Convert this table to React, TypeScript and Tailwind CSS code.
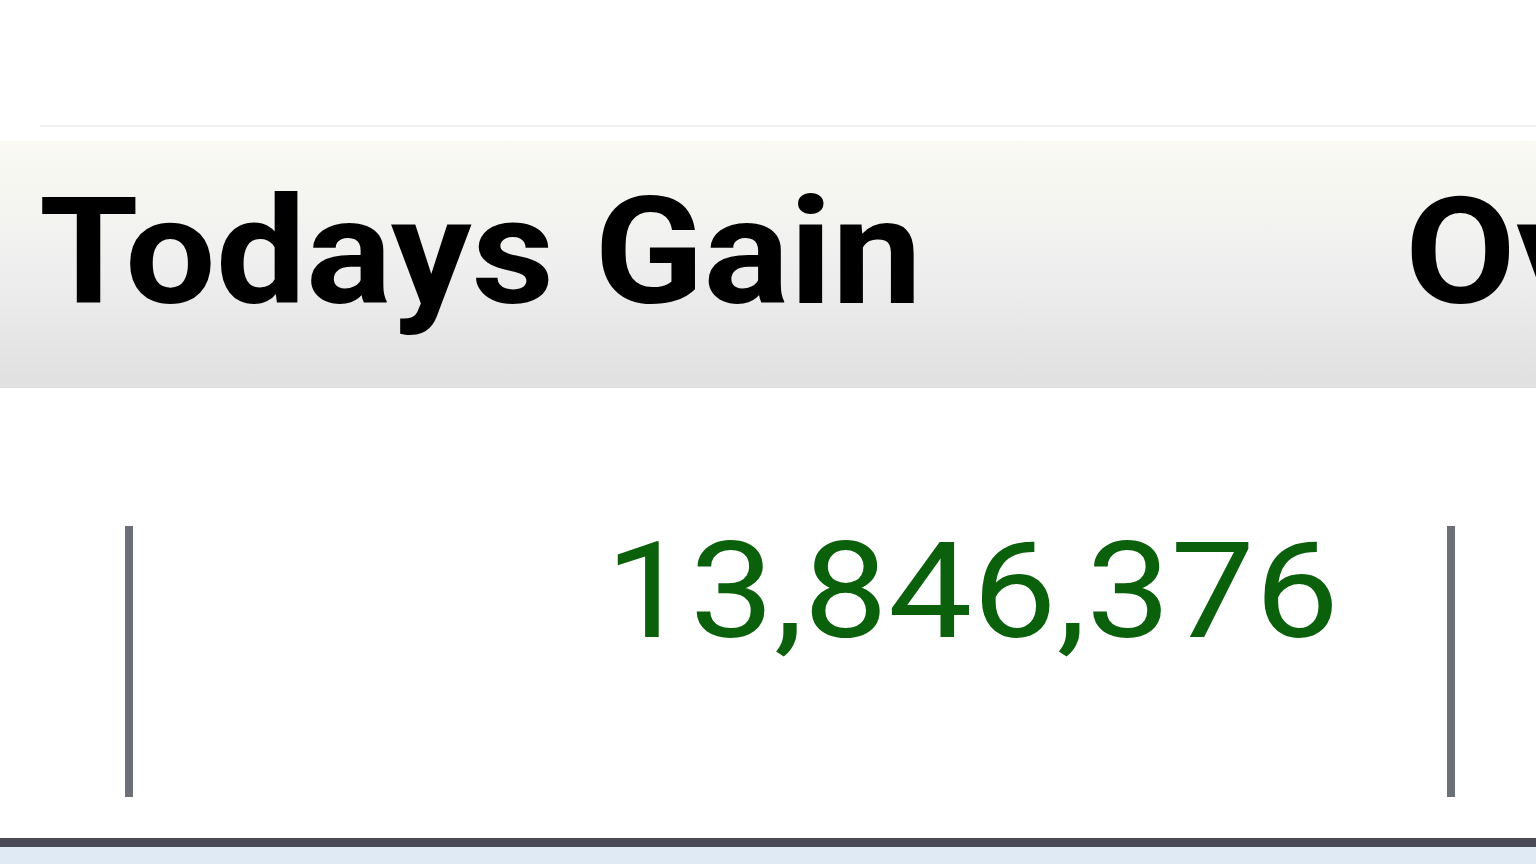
import React from 'react';

const App: React.FC = () => {
    return (
        <div className="w-[1536px] h-[864px] overflow-hidden bg-white flex flex-col" style={{ fontFamily: 'Roboto, "Liberation Sans", sans-serif' }}>
            {/* top whitespace + faint rule */}
            <div className="h-[125px] shrink-0" />
            <div className="h-[2px] ml-[40px] bg-[#efefef] shrink-0" />
            <div className="h-[14px] shrink-0" />

            {/* header band */}
            <div className="h-[247px] shrink-0 flex items-center pb-[24px] bg-gradient-to-b from-[#fafaf3] via-[#efefef] to-[#e0e0e0] whitespace-nowrap overflow-hidden">
                <div className="w-[1405px] shrink-0 pl-[39px]">
                    <span className="inline-block origin-left scale-x-[1.078] text-[149px] leading-none font-bold text-black">Todays Gain</span>
                </div>
                <div className="shrink-0">
                    <span className="inline-block origin-left scale-x-[1.078] text-[149px] leading-none font-bold text-black">Overall Gain</span>
                </div>
            </div>

            {/* value row */}
            <div className="h-[450px] shrink-0 bg-white flex items-start pl-[125px] pt-[138px]">
                <div className="w-[1330px] h-[271px] border-l-8 border-r-8 border-[#6b6f78] flex justify-end items-start pr-[108px]">
                    <span className="inline-block origin-right scale-x-[1.12] text-[134px] leading-none text-[#0b600b] mt-[-1px]">13,846,376</span>
                </div>
            </div>

            {/* bottom edge */}
            <div className="h-[9px] shrink-0 bg-[#4a4a57]" />
            <div className="flex-1 bg-[#dfeaf4]" />
        </div>
    );
};

export default App;
